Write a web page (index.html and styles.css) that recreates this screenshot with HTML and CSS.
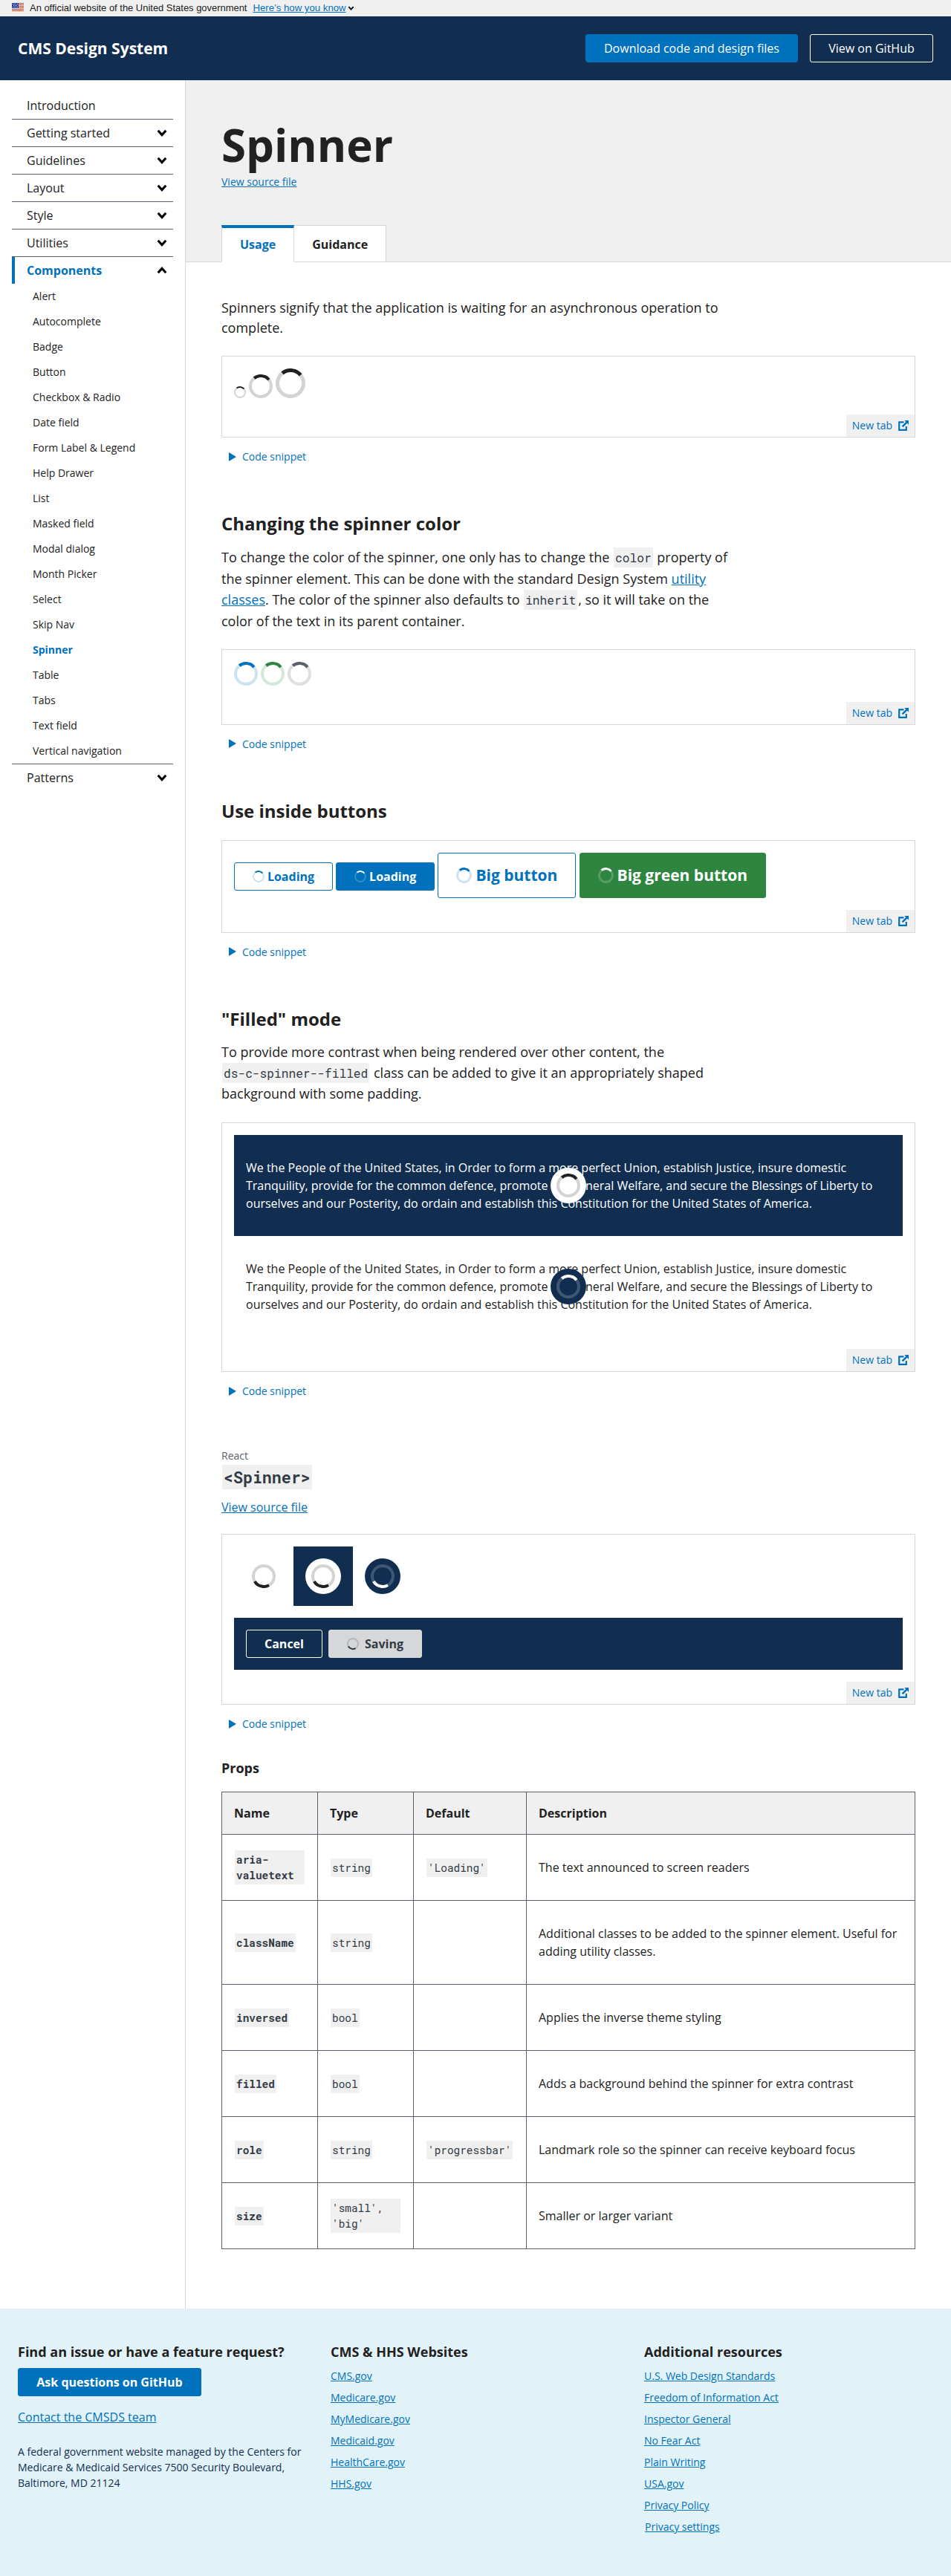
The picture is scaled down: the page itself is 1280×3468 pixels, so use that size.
FILE: index.html
```html
<!DOCTYPE html>
<html lang="en">
<head>
<meta charset="utf-8">
<title>Spinner - CMS Design System</title>
<link rel="stylesheet" href="styles.css">
</head>
<body>
<svg class="defs" width="0" height="0" aria-hidden="true">
  <symbol id="chevron" viewBox="0 0 14 10"><path d="M1.7 1.8 7 7.6l5.3-5.8" fill="none" stroke="#000" stroke-width="3.1"/></symbol>
  <symbol id="external" viewBox="0 0 14 14"><path d="M7.5 2.3H1.2v10.5h9.6V8" fill="none" stroke="currentColor" stroke-width="2.2"/><path d="M8.3 0H14v5.7l-2-2-5.6 5.6-1.7-1.7 5.6-5.6z" fill="currentColor"/></symbol>
</svg>

<div class="banner">
  <svg class="flag" viewBox="0 0 16 11"><path fill="#fff" d="M0 0h16v11H0z"/><path stroke="#db3e1f" d="M0 .5h16M0 2.5h16M0 4.5h16M0 6.5h16M0 8.5h16M0 10.5h16"/><path fill="#1e33b1" d="M0 0h9v7H0z"/><path stroke="#fff" stroke-dasharray="1 1" d="M1 1.5h7M2 3.5h6M1 5.5h7"/></svg>
  <span class="banner-text">An official website of the United States government</span>
  <a class="banner-link" href="#">Here’s how you know</a>
  <svg class="banner-chevron"><use href="#chevron"/></svg>
</div>

<header class="header">
  <span class="brand">CMS Design System</span>
  <a class="btn btn-primary btn-plain btn-download" href="#">Download code and design files</a>
  <a class="btn btn-inverse btn-plain btn-github" href="#">View on GitHub</a>
</header>

<div class="layout">
  <nav class="sidebar">
    <ul class="nav">
      <li><a class="nav-item" href="#">Introduction</a></li>
      <li><a class="nav-item" href="#">Getting started<svg><use href="#chevron"/></svg></a></li>
      <li><a class="nav-item" href="#">Guidelines<svg><use href="#chevron"/></svg></a></li>
      <li><a class="nav-item" href="#">Layout<svg><use href="#chevron"/></svg></a></li>
      <li><a class="nav-item" href="#">Style<svg><use href="#chevron"/></svg></a></li>
      <li><a class="nav-item" href="#">Utilities<svg><use href="#chevron"/></svg></a></li>
      <li><a class="nav-item nav-item-open" href="#">Components<svg><use href="#chevron"/></svg></a>
        <ul class="subnav">
          <li><a href="#">Alert</a></li>
          <li><a href="#">Autocomplete</a></li>
          <li><a href="#">Badge</a></li>
          <li><a href="#">Button</a></li>
          <li><a href="#">Checkbox &amp; Radio</a></li>
          <li><a href="#">Date field</a></li>
          <li><a href="#">Form Label &amp; Legend</a></li>
          <li><a href="#">Help Drawer</a></li>
          <li><a href="#">List</a></li>
          <li><a href="#">Masked field</a></li>
          <li><a href="#">Modal dialog</a></li>
          <li><a href="#">Month Picker</a></li>
          <li><a href="#">Select</a></li>
          <li><a href="#">Skip Nav</a></li>
          <li><a class="current" href="#">Spinner</a></li>
          <li><a href="#">Table</a></li>
          <li><a href="#">Tabs</a></li>
          <li><a href="#">Text field</a></li>
          <li><a href="#">Vertical navigation</a></li>
        </ul>
      </li>
      <li><a class="nav-item" href="#">Patterns<svg><use href="#chevron"/></svg></a></li>
    </ul>
  </nav>

  <main class="main">
    <div class="hero">
      <h1>Spinner</h1>
      <a class="source-small" href="#">View source file</a>
      <div class="tabs">
        <a class="tab tab-active" href="#">Usage</a>
        <a class="tab" href="#">Guidance</a>
      </div>
    </div>

    <div class="content">
      <section>
        <p class="intro">Spinners signify that the application is waiting for an asynchronous operation to complete.</p>
        <div class="example example-sizes">
          <div class="spinner-row">
            <span class="spinner spinner-small"></span>
            <span class="spinner"></span>
            <span class="spinner spinner-big"></span>
          </div>
          <a class="new-tab" href="#">New tab<svg><use href="#external"/></svg></a>
        </div>
        <div class="snippet">Code snippet</div>
      </section>

      <section>
        <h2>Changing the spinner color</h2>
        <p class="prose">To change the color of the spinner, one only has to change the <code>color</code> property of the spinner element. This can be done with the standard Design System <a href="#">utility classes</a>. The color of the spinner also defaults to <code>inherit</code>, so it will take on the color of the text in its parent container.</p>
        <div class="example example-colors">
          <div class="spinner-row">
            <span class="spinner blue"></span>
            <span class="spinner green"></span>
            <span class="spinner gray"></span>
          </div>
          <a class="new-tab" href="#">New tab<svg><use href="#external"/></svg></a>
        </div>
        <div class="snippet">Code snippet</div>
      </section>

      <section>
        <h2 class="h2-spaced">Use inside buttons</h2>
        <div class="example example-buttons">
          <div class="button-row">
            <button class="btn btn-outline btn-loading"><span class="spinner spinner-small"></span>Loading</button>
            <button class="btn btn-primary btn-loading"><span class="spinner spinner-small"></span>Loading</button>
            <button class="btn btn-outline btn-big"><span class="spinner spinner-medium"></span>Big button</button>
            <button class="btn btn-success btn-big"><span class="spinner spinner-medium"></span>Big green button</button>
          </div>
          <a class="new-tab" href="#">New tab<svg><use href="#external"/></svg></a>
        </div>
        <div class="snippet">Code snippet</div>
      </section>

      <section>
        <h2>"Filled" mode</h2>
        <p class="prose prose-filled">To provide more contrast when being rendered over other content, the <code>ds-c-spinner--filled</code> class can be added to give it an appropriately shaped background with some padding.</p>
        <div class="example example-filled">
          <div class="preamble preamble-dark">
            <p>We the People of the United States, in Order to form a more perfect Union, establish Justice, insure domestic Tranquility, provide for the common defence, promote the general Welfare, and secure the Blessings of Liberty to ourselves and our Posterity, do ordain and establish this Constitution for the United States of America.</p>
            <span class="filled filled-light"><span class="spinner"></span></span>
          </div>
          <div class="preamble">
            <p>We the People of the United States, in Order to form a more perfect Union, establish Justice, insure domestic Tranquility, provide for the common defence, promote the general Welfare, and secure the Blessings of Liberty to ourselves and our Posterity, do ordain and establish this Constitution for the United States of America.</p>
            <span class="filled filled-dark"><span class="spinner"></span></span>
          </div>
          <a class="new-tab" href="#">New tab<svg><use href="#external"/></svg></a>
        </div>
        <div class="snippet">Code snippet</div>
      </section>

      <section class="react">
        <div class="eyebrow">React</div>
        <h2 class="component-name"><code>&lt;Spinner&gt;</code></h2>
        <a class="source" href="#">View source file</a>
        <div class="example example-react">
          <div class="tiles">
            <div class="tile"><span class="spinner turned"></span></div>
            <div class="tile tile-dark"><span class="filled filled-light"><span class="spinner turned"></span></span></div>
            <div class="tile"><span class="filled filled-dark"><span class="spinner turned"></span></span></div>
          </div>
          <div class="toolbar">
            <button class="btn btn-inverse">Cancel</button>
            <button class="btn btn-disabled"><span class="spinner spinner-small turned"></span>Saving</button>
          </div>
          <a class="new-tab" href="#">New tab<svg><use href="#external"/></svg></a>
        </div>
        <div class="snippet">Code snippet</div>

        <h3>Props</h3>
        <table>
          <thead>
            <tr><th class="col-name">Name</th><th class="col-type">Type</th><th class="col-default">Default</th><th>Description</th></tr>
          </thead>
          <tbody>
            <tr><td><code class="prop">aria-valuetext</code></td><td><code>string</code></td><td><code>'Loading'</code></td><td>The text announced to screen readers</td></tr>
            <tr class="tall"><td><code class="prop">className</code></td><td><code>string</code></td><td></td><td>Additional classes to be added to the spinner element. Useful for adding utility classes.</td></tr>
            <tr><td><code class="prop">inversed</code></td><td><code>bool</code></td><td></td><td>Applies the inverse theme styling</td></tr>
            <tr><td><code class="prop">filled</code></td><td><code>bool</code></td><td></td><td>Adds a background behind the spinner for extra contrast</td></tr>
            <tr><td><code class="prop">role</code></td><td><code>string</code></td><td><code>'progressbar'</code></td><td>Landmark role so the spinner can receive keyboard focus</td></tr>
            <tr><td><code class="prop">size</code></td><td><code>'small', 'big'</code></td><td></td><td>Smaller or larger variant</td></tr>
          </tbody>
        </table>
      </section>
    </div>
  </main>
</div>

<footer class="footer">
  <div class="footer-col">
    <h3>Find an issue or have a feature request?</h3>
    <a class="btn btn-primary btn-ask" href="#">Ask questions on GitHub</a>
    <a class="contact" href="#">Contact the CMSDS team</a>
    <p>A federal government website managed by the Centers for Medicare &amp; Medicaid Services 7500 Security Boulevard, Baltimore, MD 21124</p>
  </div>
  <div class="footer-col">
    <h3>CMS &amp; HHS Websites</h3>
    <ul>
      <li><a href="#">CMS.gov</a></li>
      <li><a href="#">Medicare.gov</a></li>
      <li><a href="#">MyMedicare.gov</a></li>
      <li><a href="#">Medicaid.gov</a></li>
      <li><a href="#">HealthCare.gov</a></li>
      <li><a href="#">HHS.gov</a></li>
    </ul>
  </div>
  <div class="footer-col">
    <h3>Additional resources</h3>
    <ul>
      <li><a href="#">U.S. Web Design Standards</a></li>
      <li><a href="#">Freedom of Information Act</a></li>
      <li><a href="#">Inspector General</a></li>
      <li><a href="#">No Fear Act</a></li>
      <li><a href="#">Plain Writing</a></li>
      <li><a href="#">USA.gov</a></li>
      <li><a href="#">Privacy Policy</a></li>
      <li class="privacy-settings"><a href="#">Privacy settings</a></li>
    </ul>
  </div>
</footer>
</body>
</html>
```
FILE: styles.css
```css
* { box-sizing: border-box; }

body {
  margin: 0;
  color: #212121;
  background: #fff;
  font: 16px/24px "Open Sans", sans-serif;
}

h1, h2, h3, p, ul { margin: 0; padding: 0; }
ul { list-style: none; }
a { color: #0071bc; }
.defs { position: absolute; }

/* Government banner */
.banner {
  display: flex;
  align-items: center;
  height: 22px;
  padding-left: 16px;
  background: #f0f0f0;
  font: 12.94px/22px "Liberation Sans", Arial, sans-serif;
}
.flag { width: 16px; height: 11px; margin: 0 8px 3px 0; }
.banner-link { margin-left: 8px; font-size: 13.2px; }
.banner-chevron { width: 9px; height: 6px; margin-left: 2px; }

/* Header */
.header {
  display: flex;
  align-items: center;
  height: 86px;
  padding: 0 24px;
  background: #112e51;
}
.brand { flex: 1; color: #fff; font-size: 21px; font-weight: 700; }
.header .btn + .btn { margin-left: 16px; }

/* Buttons */
.btn {
  display: inline-flex;
  align-items: center;
  justify-content: center;
  height: 38px;
  padding: 0 24px;
  border: 1px solid transparent;
  border-radius: 3px;
  background: transparent;
  font: 700 16px/20px "Open Sans", sans-serif;
  text-decoration: none;
  white-space: nowrap;
}
.btn-plain { font-weight: 400; }
.btn-download { width: 286px; }
.btn-github { width: 166px; }
.btn-primary { border-color: #0071bc; background: #0071bc; color: #fff; }
.btn-outline { border-color: #0071bc; background: #fff; color: #0071bc; }
.btn-success { border-color: #2e8540; background: #2e8540; color: #fff; }
.btn-inverse { border-color: #fff; color: #fff; }
.btn-disabled { border-color: #d6d7d9; background: #d6d7d9; color: #323a45; }
.btn-big { height: 61px; font-size: 21px; }

/* Page layout */
.layout { display: flex; height: 3000px; }
.sidebar {
  width: 250px;
  padding: 16px 16px 0;
  border-right: 1px solid #d6d7d9;
}
.main { flex: 1; min-width: 0; }

/* Side navigation */
.nav > li + li { border-top: 1px solid #5b616b; }
.nav-item {
  display: flex;
  align-items: center;
  justify-content: space-between;
  height: 36px;
  padding: 0 8px 0 20px;
  color: #212121;
  text-decoration: none;
}
.nav-item svg { width: 14px; height: 10px; }
.nav-item-open {
  padding-left: 16px;
  border-left: 4px solid #0071bc;
  color: #0071bc;
  font-weight: 700;
}
.nav-item-open svg { transform: rotate(180deg); }
.subnav a {
  display: block;
  height: 34px;
  padding-left: 28px;
  color: #212121;
  font-size: 14px;
  line-height: 34px;
  text-decoration: none;
}
.subnav .current { color: #0071bc; font-weight: 700; }

/* Hero and tabs */
.hero {
  display: flex;
  flex-direction: column;
  align-items: flex-start;
  height: 245px;
  padding: 49px 48px 0;
  border-bottom: 1px solid #d6d7d9;
  background: #f0f0f0;
}
h1 { font-size: 60px; font-weight: 700; line-height: 77px; }
.source-small { font-size: 14px; line-height: 21px; }
.tabs { display: flex; height: 50px; margin-top: auto; margin-bottom: -1px; }
.tab {
  padding: 0 24px;
  border: 1px solid #d6d7d9;
  border-left-width: 0;
  background: #fff;
  color: #212121;
  font-weight: 700;
  line-height: 50px;
  text-decoration: none;
}
.tab-active {
  border-top: 4px solid #0071bc;
  border-bottom-color: #fff;
  border-left-width: 1px;
  color: #0071bc;
  line-height: 44px;
}

/* Content */
.content { padding: 48px 48px 0; }
section + section { padding-top: 64px; }
h2 { font-size: 24px; font-weight: 700; line-height: 31px; }
.h2-spaced { margin-bottom: 24px; }
.intro, .prose { max-width: 690px; font-size: 18px; }
.intro { line-height: 27px; margin-bottom: 24px; }
.prose { line-height: 28.7px; margin: 16px 0 23px; }
.prose-filled { line-height: 28.2px; margin: 15px 0 24.6px; }
code {
  margin: 0 1px;
  padding: 3px 2px;
  background: #f0f0f0;
  color: #323a45;
  font-family: "Roboto Mono", "Liberation Mono", monospace;
  font-size: 0.9em;
}
.prose code { line-height: 1; white-space: nowrap; }

/* Example frames */
.example {
  position: relative;
  padding: 16px;
  border: 1px solid #d6d7d9;
}
.example-sizes { height: 110px; }
.example-colors { height: 102px; }
.example-buttons { height: 125px; }
.example-filled { height: 336px; }
.example-react { height: 230px; }
.new-tab {
  position: absolute;
  right: 0;
  bottom: 0;
  display: flex;
  align-items: center;
  gap: 8px;
  height: 30px;
  padding: 0 8px;
  background: #f0f0f0;
  font-size: 14px;
  text-decoration: none;
}
.new-tab svg { width: 14px; height: 14px; }
.snippet {
  display: flex;
  align-items: center;
  gap: 8px;
  margin-top: 15px;
  padding-left: 10px;
  color: #0071bc;
  font-size: 14px;
  line-height: 21px;
}
.snippet::before {
  content: "";
  border-left: 10px solid #0071bc;
  border-top: 6px solid transparent;
  border-bottom: 6px solid transparent;
}

/* Spinners */
.spinner {
  --thickness: 4px;
  display: inline-grid;
  flex: none;
  width: 32px;
  height: 32px;
  transform: rotate(6deg);
}
.spinner::before, .spinner::after {
  content: "";
  grid-area: 1 / 1;
  border: var(--thickness) solid currentColor;
  border-radius: 50%;
}
.spinner::before { opacity: 0.2; }
.spinner::after { border-color: currentColor transparent transparent; }
.spinner-small { --thickness: 2px; width: 16px; height: 16px; }
.spinner-medium { --thickness: 3px; width: 21px; height: 21px; }
.spinner-big { --thickness: 5px; width: 40px; height: 40px; }
.turned { transform: rotate(195deg); }
.spinner-row { display: flex; align-items: flex-end; gap: 4px; }
.blue { color: #0071bc; }
.green { color: #2e8540; }
.gray { color: #5b616b; }

.button-row { display: flex; align-items: flex-start; gap: 4.2px; }
.btn-loading { width: 133px; margin-top: 13px; }
.button-row .spinner-small { margin-right: 4px; }
.button-row .spinner-medium { margin-right: 5px; }

.filled {
  display: grid;
  place-items: center;
  width: 48px;
  height: 48px;
  border-radius: 50%;
}
.filled-light { background: #fff; color: #212121; }
.filled-dark { background: #112e51; color: #fff; }

.preamble {
  display: grid;
  align-items: center;
  justify-items: center;
  height: 136px;
  padding: 0 16px;
}
.preamble > * { grid-area: 1 / 1; }
.preamble-dark { background: #112e51; color: #fff; }

/* React section */
section.react { padding-top: 66px; }
.eyebrow { color: #5b616b; font-size: 14px; line-height: 21px; }
.component-name { height: 36px; margin-bottom: 11px; line-height: 36px; }
.component-name code { padding: 2px; }
.source { display: block; width: max-content; margin-bottom: 24px; }
.tiles { display: flex; }
.tile { display: grid; place-items: center; width: 80px; height: 80px; }
.tile-dark { background: #112e51; }
.toolbar {
  display: flex;
  gap: 8px;
  margin-top: 16px;
  padding: 16px;
  background: #112e51;
}
.toolbar .spinner { margin-right: 8px; }

h3 { font-size: 18px; font-weight: 700; line-height: 23px; }
section h3 { margin: 38px 0 20px; }
table { width: 934px; table-layout: fixed; border-collapse: collapse; }
th, td { padding: 0 16px; border: 1px solid #5b616b; text-align: left; }
th { height: 57px; background: #f0f0f0; }
td { height: 89px; }
.tall td { height: 113px; }
.col-name, .col-type { width: 129px; }
.col-default { width: 152px; }
td code { display: inline-block; padding: 2px; line-height: 21px; vertical-align: middle; }
.prop { font-weight: 700; }

/* Footer */
.footer {
  display: grid;
  grid-template-columns: 421px 422px 1fr;
  height: 360px;
  padding: 47px 24px 0;
  background: #e1f3f8;
}
.footer-col h3 { margin-bottom: 10px; }
.btn-ask { display: flex; width: 247px; }
.contact { display: block; margin-top: 16px; }
.footer p { width: 390px; margin-top: 24px; color: #112e51; font-size: 14px; line-height: 21px; }
.footer li { height: 29px; font-size: 14px; line-height: 21px; }
.privacy-settings { padding-left: 1px; }
```
